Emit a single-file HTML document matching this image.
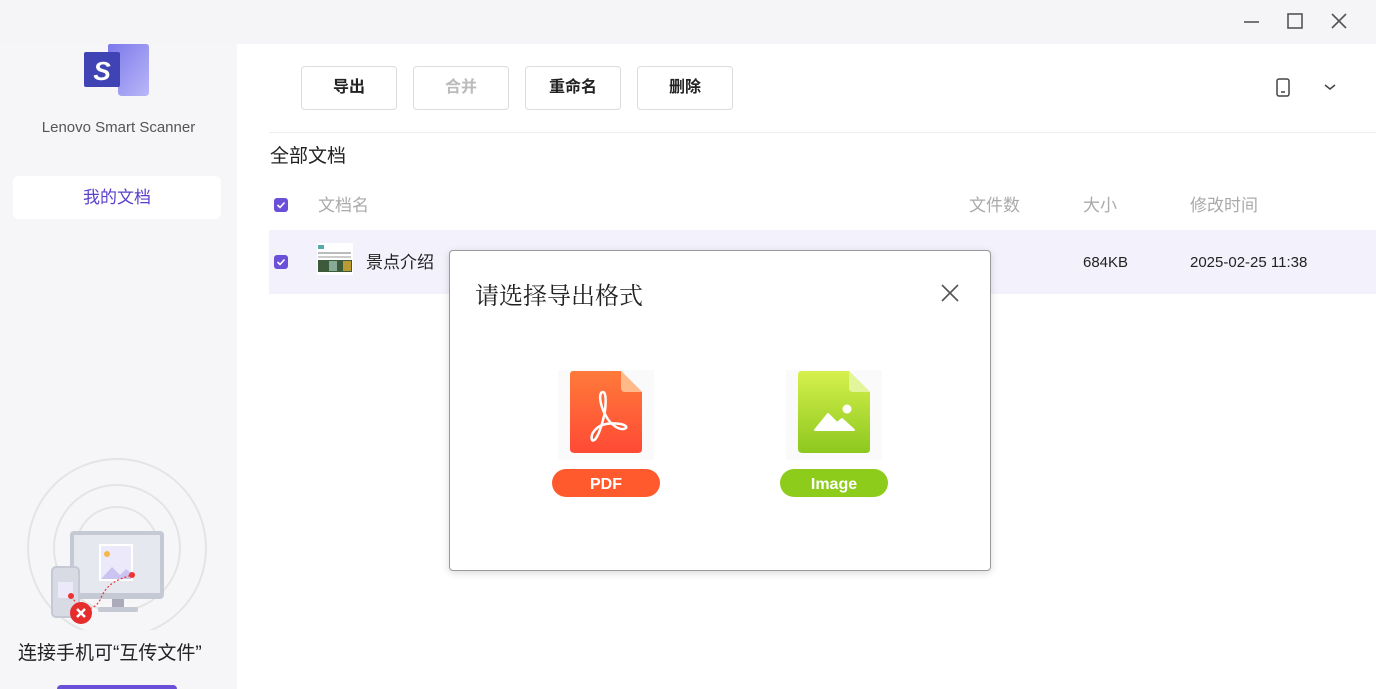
<!DOCTYPE html>
<html><head><meta charset="utf-8"><style>
*{margin:0;padding:0;box-sizing:border-box}
html,body{width:1376px;height:689px;overflow:hidden}
body{background:#fff;font-family:"Liberation Sans","Noto Sans CJK SC",sans-serif;position:relative}
.abs{position:absolute}
.top{left:0;top:0;width:1376px;height:44px;background:#f5f5f7}
.side{left:0;top:44px;width:237px;height:645px;background:#f6f6f8}
.btn{top:66px;height:44px;width:96px;border:1px solid #dcdcdc;border-radius:4px;background:#fff;font-size:16px;font-weight:bold;color:#222;text-align:center;line-height:42px}
.cb{width:14px;height:14px;border-radius:3px;background:#6a4fd8}
.cb svg{display:block}
.hd{top:191px;font-size:17px;color:#aaa}
</style></head><body>
<div class="abs top"></div>
<div class="abs side"></div>
<svg class="abs" style="left:1240px;top:10px" width="120" height="22"><path d="M4 12H19" stroke="#555" stroke-width="1.6"/><rect x="48" y="4" width="14" height="14" fill="none" stroke="#555" stroke-width="1.6"/><path d="M92 4L106 18M106 4L92 18" stroke="#555" stroke-width="1.6"/></svg>
<!-- logo -->
<svg class="abs" style="left:82px;top:44px" width="70" height="56"><defs><linearGradient id="lg" x1="0" y1="0" x2="1" y2="1"><stop offset="0" stop-color="#7b78ea"/><stop offset="1" stop-color="#b9b7f8"/></linearGradient></defs><path d="M26 2Q26 0 28 0H64Q67 0 67 3V48Q67 52 63 52H40Q36 52 36 48V40L26 40Z" fill="url(#lg)"/><rect x="2" y="8" width="36" height="35" rx="2" fill="#3f43b4"/><text x="20" y="36" font-size="26" font-weight="bold" fill="#fff" text-anchor="middle" font-family="Liberation Sans" font-style="italic">S</text></svg>
<div class="abs" style="left:0;width:237px;top:119px;text-align:center;font-size:15px;color:#555">Lenovo Smart Scanner</div>
<div class="abs" style="left:13px;top:176px;width:208px;height:43px;background:#fff;border-radius:6px;text-align:center;line-height:43px;font-size:17px;color:#5b3fc9">我的文档</div>
<!-- illustration -->
<svg class="abs" style="left:20px;top:455px" width="200" height="175">
<circle cx="97" cy="93" r="89" fill="none" stroke="#e4e4e4" stroke-width="2"/>
<circle cx="97" cy="93" r="63" fill="none" stroke="#e4e4e4" stroke-width="2"/>
<circle cx="97" cy="93" r="41" fill="none" stroke="#e4e4e4" stroke-width="2"/>
<rect x="50" y="76" width="94" height="68" rx="4" fill="#c5c9d4"/><rect x="54" y="80" width="86" height="58" fill="#e6e8ef"/>
<rect x="78" y="152" width="40" height="5" rx="2" fill="#c5c9d4"/><rect x="92" y="144" width="12" height="8" fill="#aab"/>
<rect x="79" y="89" width="34" height="37" fill="#fff"/><rect x="81" y="91" width="30" height="33" fill="#ece9fb"/><circle cx="87" cy="99" r="3" fill="#f5b84a"/><path d="M81 124L92 112L100 120L106 114L111 118V124Z" fill="#cbc3f0"/>
<rect x="32" y="112" width="27" height="50" rx="4" fill="#d8dbe4" stroke="#c5c9d4" stroke-width="2"/>
<rect x="38" y="127" width="15" height="16" fill="#ece9fb"/>
<path d="M52 141C60 160 75 155 80 145C86 130 95 125 112 120" fill="none" stroke="#e33" stroke-width="1.2" stroke-dasharray="2 2"/>
<circle cx="51" cy="141" r="3" fill="#e33"/><circle cx="112" cy="120" r="3" fill="#e33"/>
<circle cx="61" cy="158" r="11" fill="#e52d2d"/><path d="M57 154L65 162M65 154L57 162" stroke="#fff" stroke-width="2.5"/>
</svg>
<div class="abs" style="left:18px;top:638px;font-size:19px;color:#222">连接手机可“互传文件”</div>
<div class="abs" style="left:57px;top:685px;width:120px;height:4px;border-radius:10px 10px 0 0;background:#6a4fd8"></div>
<!-- toolbar -->
<div class="abs btn" style="left:301px">导出</div>
<div class="abs btn" style="left:413px;color:#bbb">合并</div>
<div class="abs btn" style="left:525px">重命名</div>
<div class="abs btn" style="left:637px">删除</div>
<svg class="abs" style="left:1272px;top:76px" width="70" height="24"><rect x="5" y="3" width="12" height="17" rx="2" fill="none" stroke="#444" stroke-width="1.5"/><path d="M9 16H13" stroke="#444" stroke-width="1.5"/><path d="M53 9L58 13L63 9" fill="none" stroke="#444" stroke-width="1.5"/></svg>
<div class="abs" style="left:269px;top:132px;width:1107px;height:1px;background:#eee"></div>
<div class="abs" style="left:270px;top:141px;font-size:19px;color:#222">全部文档</div>
<div class="abs cb" style="left:274px;top:198px"><svg width="14" height="14"><path d="M3.5 7L6 9.5L10.5 4.5" fill="none" stroke="#fff" stroke-width="1.6"/></svg></div>
<div class="abs hd" style="left:318px">文档名</div>
<div class="abs hd" style="left:969px">文件数</div>
<div class="abs hd" style="left:1083px">大小</div>
<div class="abs hd" style="left:1190px">修改时间</div>
<div class="abs" style="left:269px;top:230px;width:1107px;height:64px;background:#f3f2fc"></div>
<div class="abs cb" style="left:274px;top:255px"><svg width="14" height="14"><path d="M3.5 7L6 9.5L10.5 4.5" fill="none" stroke="#fff" stroke-width="1.6"/></svg></div>
<svg class="abs" style="left:317px;top:243px" width="36" height="32"><rect width="36" height="32" fill="#fff"/><rect x="1" y="2" width="6" height="4" fill="#5aa"/><rect x="1" y="9" width="33" height="2" fill="#bbb"/><rect x="1" y="13" width="33" height="2" fill="#ccc"/><rect x="1" y="17" width="34" height="12" fill="#3d5a3a"/><rect x="12" y="18" width="8" height="10" fill="#8a9"/><rect x="26" y="18" width="8" height="10" fill="#b93"/></svg>
<div class="abs" style="left:366px;top:248px;font-size:17px;color:#222">景点介绍</div>
<div class="abs" style="left:1083px;top:254px;font-size:15px;color:#222">684KB</div>
<div class="abs" style="left:1190px;top:254px;font-size:15px;color:#222">2025-02-25 11:38</div>
<!-- dialog -->
<div class="abs" style="left:449px;top:250px;width:542px;height:321px;background:#fff;border:1px solid #999;border-radius:4px;box-shadow:0 2px 8px rgba(0,0,0,.15)"></div>
<div class="abs" style="left:475px;top:276px;font-size:24px;color:#222;font-family:'Liberation Serif','Noto Serif CJK SC',serif">请选择导出格式</div>
<svg class="abs" style="left:940px;top:283px" width="20" height="20"><path d="M2 2L18 18M18 2L2 18" stroke="#555" stroke-width="1.6"/></svg>
<svg class="abs" style="left:558px;top:370px" width="96" height="90"><rect x="0" y="0" width="96" height="90" fill="#fafafa"/><defs><linearGradient id="g1" x1="0" y1="0" x2="0" y2="1"><stop offset="0" stop-color="#ff7a3a"/><stop offset="1" stop-color="#ff4a35"/></linearGradient><linearGradient id="g2" x1="0" y1="0" x2="0" y2="1"><stop offset="0" stop-color="#d6f04c"/><stop offset="1" stop-color="#8cc81e"/></linearGradient></defs><path d="M15 1H63L84 22V79Q84 83 80 83H17Q12 83 12 79V5Q12 1 15 1Z" fill="url(#g1)"/><path d="M63 1V18Q63 22 67 22H84Z" fill="#ffb98a"/><path d="M45 22C40 22 42 36 48 46C52 54 62 62 68 58C70 55 60 52 48 54C38 56 32 64 34 70C37 73 42 62 45 50C48 40 49 22 45 22Z" fill="none" stroke="#fff" stroke-width="2.5"/></svg>
<svg class="abs" style="left:786px;top:370px" width="96" height="90"><rect width="96" height="90" fill="#fafafa"/><path d="M15 1H63L84 22V79Q84 83 80 83H17Q12 83 12 79V5Q12 1 15 1Z" fill="url(#g2)"/><path d="M63 1V18Q63 22 67 22H84Z" fill="#e2f59a"/><circle cx="61" cy="39" r="4.5" fill="#fff"/><path d="M29 60L42 44L51 53L56 49L68 60Z" fill="#fff" stroke="#fff" stroke-width="2" stroke-linejoin="round"/></svg>
<div class="abs" style="left:552px;top:469px;width:108px;height:28px;border-radius:14px;background:#ff5a2e;color:#fff;font-weight:bold;font-size:16px;text-align:center;line-height:31px">PDF</div>
<div class="abs" style="left:780px;top:469px;width:108px;height:28px;border-radius:14px;background:#8dcc1a;color:#fff;font-weight:bold;font-size:16px;text-align:center;line-height:31px">Image</div>
</body></html>
